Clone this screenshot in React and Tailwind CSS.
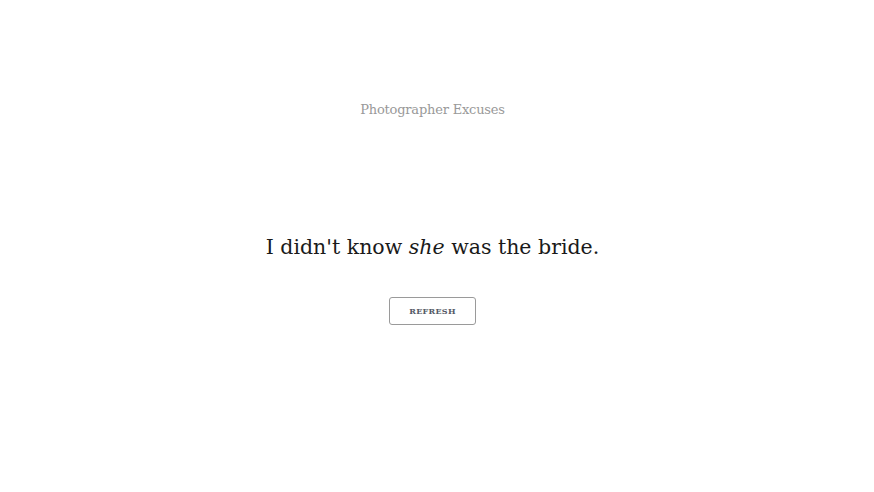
import React from "react";

export default function App() {
  return (
    <div className="min-h-screen bg-white flex flex-col items-center pr-[9px] font-['DejaVu_Serif',serif]">
      <h1 className="mt-[101px] text-[13px] leading-[18px] text-[#999999] tracking-[-0.2px]">
        Photographer Excuses
      </h1>
      <p className="mt-[114px] text-[20.5px] leading-[28px] text-[#1a1a1a]">
        I didn't know <em>she</em> was the bride.
      </p>
      <button className="mt-[36px] w-[87px] h-[28px] border border-[#9a9a9a] rounded-[3px] bg-white text-[8px] tracking-[0.3px] text-[#555a66] font-bold">
        REFRESH
      </button>
    </div>
  );
}
